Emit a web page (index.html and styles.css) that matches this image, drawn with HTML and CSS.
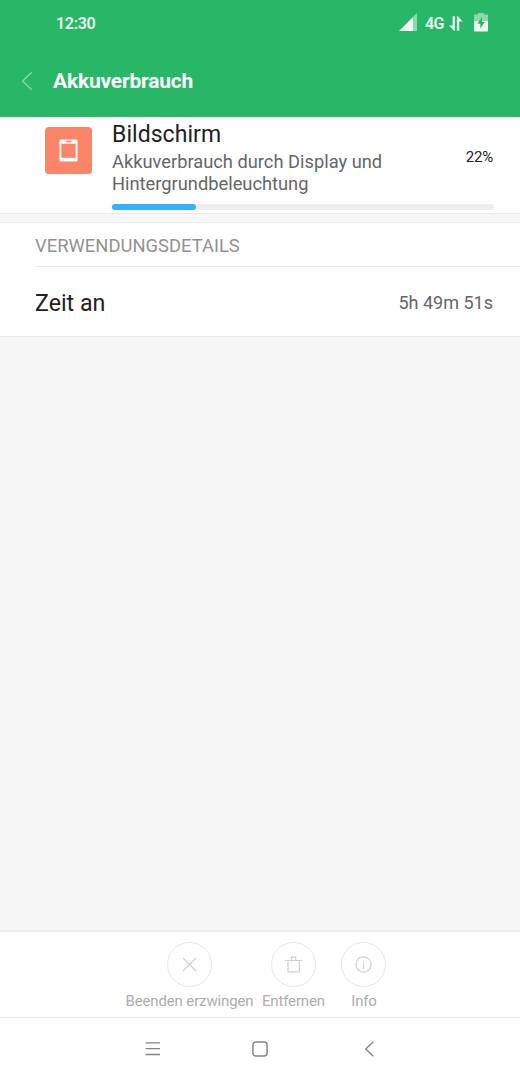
FILE: index.html
```
<!DOCTYPE html>
<html lang="de">

<head>
    <title>Akkuverbrauch</title>
    <meta charset="UTF-8">
    <meta name="viewport" content="width=device-width, initial-scale=1">
    <link rel="stylesheet" href="styles.css">
</head>

<body>
<!-- Kopfbereich -->
<header class="header">
    <div class="status-bar">
        <span class="clock">12:30</span>
        <div class="status-icons">
            <svg class="signal" width="18" height="18" viewBox="0 0 18 18">
                <path d="M0 18L14 4V18Z" fill="#f2f5f3"/>
                <path d="M14 4L18 0V18H14Z" fill="#8ed8b0"/>
            </svg>
            <span class="network">4G</span>
            <svg class="transfer" width="14" height="15" viewBox="0 0 14 15">
                <path d="M0 9.5H3.6V0.3H5.9V14.7H5L0 9.5Z" fill="#eaf6ef"/>
                <path d="M13.8 5.5H10.2V14.7H7.9V0.3H8.8L13.8 5.5Z" fill="#eaf6ef"/>
            </svg>
            <svg class="battery" width="14" height="19" viewBox="0 0 14 19">
                <path d="M1 1.5H4V0H10V1.5H13Q14 1.5 14 2.5V8H0V2.5Q0 1.5 1 1.5Z" fill="#8ed8b0"/>
                <path d="M0 8H14V17.5Q14 18.5 13 18.5H1Q0 18.5 0 17.5Z" fill="#f2f5f3"/>
                <path d="M8 4L3.4 10.8H6.3V15.6L10.7 8.9H8Z" fill="#28b767"/>
            </svg>
        </div>
    </div>
    <div class="title-bar">
        <svg class="back" width="12" height="20" viewBox="0 0 12 20">
            <path d="M10.8 1.3L1.6 10L10.8 18.7" fill="none" stroke="#8fd8ae" stroke-width="1.3"/>
        </svg>
        <h1 class="title">Akkuverbrauch</h1>
    </div>
</header>

<main class="content">
    <!-- Verbrauch der App -->
    <section class="usage">
        <div class="app-icon">
            <svg width="19" height="23" viewBox="0 0 19 23">
                <path d="M2 0.5H17Q18.5 0.5 18.5 2V21Q18.5 22.5 17 22.5H2Q0.5 22.5 0.5 21V2Q0.5 0.5 2 0.5Z" fill="#fff"/>
                <path d="M2.3 4.7H16.7V18.8H2.3Z" fill="#fb8569"/>
                <path d="M7.5 2.5H11.8" stroke="#fb8569" stroke-width="1.5" stroke-linecap="round"/>
            </svg>
        </div>
        <div class="usage-body">
            <div class="usage-row">
                <div class="usage-text">
                    <h2 class="app-name">Bildschirm</h2>
                    <p class="app-summary">Akkuverbrauch durch Display und Hintergrundbeleuchtung</p>
                </div>
                <span class="percent">22%</span>
            </div>
            <div class="progress">
                <div class="progress-fill" style="width: 22%"></div>
            </div>
        </div>
    </section>

    <!-- Verwendungsdetails -->
    <section class="details">
        <h3 class="details-title">VERWENDUNGSDETAILS</h3>
        <div class="details-row">
            <span class="details-label">Zeit an</span>
            <span class="details-value">5h 49m 51s</span>
        </div>
    </section>
</main>

<!-- Aktionen -->
<div class="actions">
    <div class="action">
        <div class="action-circle">
            <svg width="15" height="15" viewBox="0 0 15 15">
                <path d="M1 1L14 14M14 1L1 14" fill="none" stroke="#cfd2d2" stroke-width="1.2"/>
            </svg>
        </div>
        <span>Beenden erzwingen</span>
    </div>
    <div class="action">
        <div class="action-circle">
            <svg width="17" height="17" viewBox="0 0 17 17">
                <path d="M0 4.5H17M3 4.5V15.8H14.5V4.5M6.3 4.5V1.2H10.7V4.5" fill="none" stroke="#cfd2d2" stroke-width="1.2"/>
            </svg>
        </div>
        <span>Entfernen</span>
    </div>
    <div class="action">
        <div class="action-circle">
            <svg width="17" height="17" viewBox="0 0 17 17">
                <circle cx="8.5" cy="8.5" r="7.6" fill="none" stroke="#cfd2d2" stroke-width="1.2"/>
                <path d="M8.5 7.2V13M8.5 4.2V5.6" fill="none" stroke="#cfd2d2" stroke-width="1.2"/>
            </svg>
        </div>
        <span>Info</span>
    </div>
</div>

<!-- Navigationsleiste -->
<nav class="nav-bar">
    <svg width="16" height="16" viewBox="0 0 16 16">
        <path d="M1.6 1.9H16M1.6 7.7H16M1.6 13.5H16" fill="none" stroke="#858585" stroke-width="1.3"/>
    </svg>
    <svg width="16" height="16" viewBox="0 0 16 16">
        <rect x="0.9" y="0.9" width="14.2" height="14.2" rx="3" fill="none" stroke="#858585" stroke-width="1.5"/>
    </svg>
    <svg width="16" height="16" viewBox="0 0 16 16">
        <path d="M13.3 0.7L5.7 8L13.3 15.3" fill="none" stroke="#858585" stroke-width="1.4"/>
    </svg>
</nav>
</body>

</html>
```
FILE: styles.css
```
* {
    box-sizing: border-box;
}

body {
    margin: 0;
    height: 100vh;
    display: flex;
    flex-direction: column;
    background-color: #f7f7f7;
    font-family: Roboto, 'Liberation Sans', sans-serif;
    color: #222;
}

h1, h2, h3, p {
    margin: 0;
    font-weight: 400;
}

svg {
    display: block;
    flex-shrink: 0;
}

/* Kopfbereich */
.header {
    height: 117px;
    background-color: #28b767;
    color: #fff;
}

.status-bar {
    display: flex;
    justify-content: space-between;
    align-items: center;
    height: 46px;
    padding: 0 32px 0 56px;
}

.clock {
    font-size: 16px;
    font-weight: 600;
    letter-spacing: -0.3px;
    color: #eefaf3;
}

.status-icons {
    display: flex;
    align-items: center;
}

.signal {
    margin-top: -2px;
}

.network {
    width: 19px;
    margin: 0 5px 0 8px;
    padding-top: 1px;
    font-size: 16px;
    font-weight: 600;
    letter-spacing: -0.6px;
    white-space: nowrap;
    color: #eefaf3;
}

.battery {
    margin: -2px 0 0 11px;
}

.title-bar {
    display: flex;
    align-items: center;
    height: 70px;
    padding-left: 21px;
}

.title {
    margin-left: 20px;
    font-size: 21px;
    font-weight: 700;
    letter-spacing: -0.2px;
}

/* Verbrauch der App */
.content {
    flex: 1;
}

.usage {
    display: flex;
    height: 97px;
    padding: 3px 26px 0 44px;
    background-color: #fff;
    border-bottom: 1px solid #ebebeb;
}

.app-icon {
    display: flex;
    justify-content: center;
    align-items: center;
    width: 47.5px;
    height: 47.5px;
    margin: 6.5px 20px 0 0.5px;
    border-radius: 4px;
    background-color: #fb8569;
}

.usage-body {
    flex: 1;
}

.usage-row {
    display: flex;
    justify-content: space-between;
    height: 77px;
}

.usage-text {
    width: 290px;
    padding-top: 1px;
}

.app-name {
    font-size: 23px;
    line-height: 28px;
    letter-spacing: 0.05px;
}

.app-summary {
    padding-top: 2px;
    font-size: 18.3px;
    line-height: 21.5px;
    color: #666;
}

.percent {
    padding-right: 1px;
    font-size: 15px;
    line-height: 74px;
    letter-spacing: -0.2px;
}

.progress {
    height: 6px;
    margin-top: 7px;
    border-radius: 3px;
    background-color: #eceeee;
}

.progress-fill {
    height: 6px;
    border-radius: 3px;
    background-color: #33b1fb;
}

/* Verwendungsdetails */
.details {
    height: 115px;
    margin-top: 8px;
    padding-left: 35px;
    background-color: #fff;
    border-top: 1px solid #efefef;
    border-bottom: 1px solid #ebebeb;
}

.details-title {
    height: 44px;
    border-bottom: 1px solid #e9e9e9;
    font-size: 18.4px;
    line-height: 46px;
    color: #929292;
}

.details-row {
    display: flex;
    justify-content: space-between;
    align-items: center;
    height: 70px;
    padding-right: 27px;
}

.details-label {
    padding-top: 2px;
    font-size: 23.2px;
}

.details-value {
    font-size: 18px;
    color: #666;
}

/* Aktionen */
.actions {
    display: flex;
    justify-content: center;
    gap: 8.5px;
    height: 87px;
    padding-top: 10px;
    background-color: #fff;
    border-top: 2px solid #eee;
}

.action {
    display: flex;
    flex-direction: column;
    align-items: center;
    min-width: 61px;
    font-size: 15px;
    line-height: 29px;
    letter-spacing: -0.14px;
    color: #adadad;
}

.action-circle {
    display: flex;
    justify-content: center;
    align-items: center;
    width: 45px;
    height: 45px;
    border: 1px solid #e4e6e6;
    border-radius: 50%;
}

/* Navigationsleiste */
.nav-bar {
    display: flex;
    justify-content: center;
    align-items: center;
    gap: 92px;
    height: 63px;
    padding-bottom: 1px;
    background-color: #fff;
    border-top: 1px solid #eee;
}
```
